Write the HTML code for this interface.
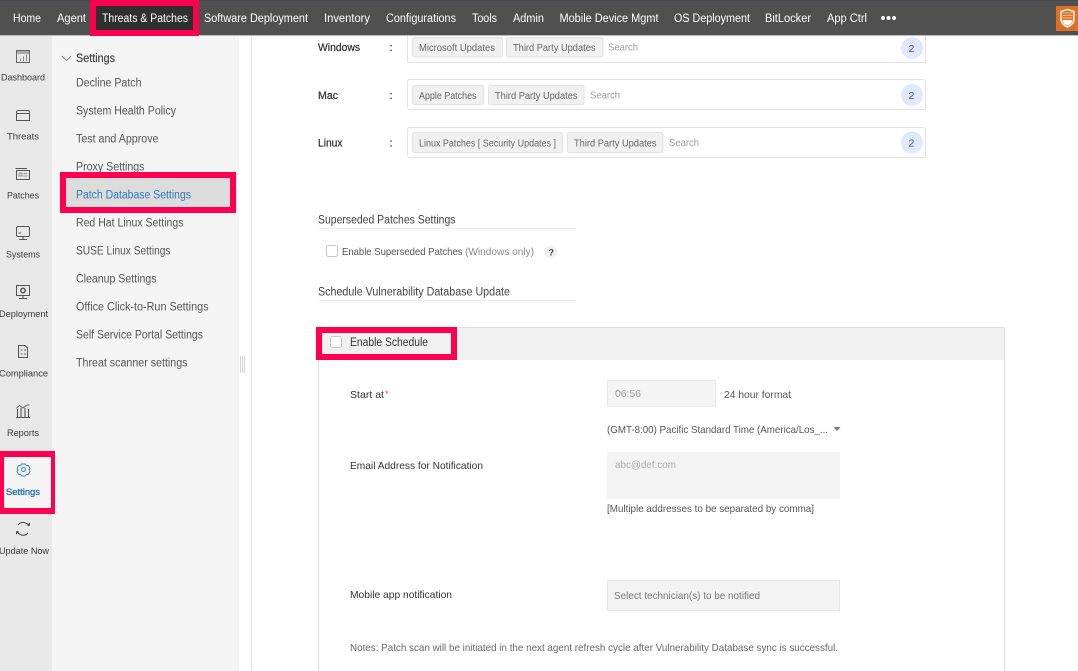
<!DOCTYPE html>
<html><head><meta charset="utf-8"><title>Patch Database Settings</title>
<style>
html,body{margin:0;padding:0;background:#fff;width:1078px;height:671px;overflow:hidden}
svg{display:block;filter:blur(.35px)}
text{font-family:"Liberation Sans",sans-serif;font-size:11px;fill:#555}
.n{fill:#fff;font-size:11.5px}
.r{font-size:9.5px;fill:#3a3a3a}
.m{fill:#555;font-size:11.5px}
.c{fill:#666;font-size:10px}
.s{fill:#999;font-size:10.5px}
.l{fill:#333;font-size:10.5px}
.h{fill:#333;font-size:11px;stroke:#333;stroke-width:.25px}
.d{fill:#555;font-size:10.5px}
.t{fill:#444;font-size:11.5px}
.i{fill:none;stroke:#555;stroke-width:1}
</style></head><body>
<svg width="1078" height="671" viewBox="0 0 1078 671" xmlns="http://www.w3.org/2000/svg">
<!-- panels -->
<rect x="0" y="36" width="52" height="635" fill="#e8e8e8"/>
<rect x="52" y="36" width="187" height="635" fill="#f4f4f4"/>
<rect x="251" y="36" width="1" height="635" fill="#e6e6e6"/>
<!-- top bar -->
<rect x="0" y="0" width="1078" height="35" fill="#505050"/>
<rect x="0" y="0" width="1078" height="1" fill="#474752"/>
<rect x="0" y="35" width="1078" height="1" fill="#bdbdbd"/>
<rect x="90" y="0" width="109" height="36" fill="#ff0050"/>
<rect x="96" y="6" width="97" height="24" fill="#303030"/>
<text class="n" x="13" y="22" textLength="28" lengthAdjust="spacingAndGlyphs">Home</text>
<text class="n" x="57" y="22" textLength="29" lengthAdjust="spacingAndGlyphs">Agent</text>
<text class="n" x="102" y="22" textLength="86" lengthAdjust="spacingAndGlyphs">Threats &amp; Patches</text>
<text class="n" x="204" y="22" textLength="104" lengthAdjust="spacingAndGlyphs">Software Deployment</text>
<text class="n" x="324" y="22" textLength="46" lengthAdjust="spacingAndGlyphs">Inventory</text>
<text class="n" x="386" y="22" textLength="70" lengthAdjust="spacingAndGlyphs">Configurations</text>
<text class="n" x="472" y="22" textLength="25" lengthAdjust="spacingAndGlyphs">Tools</text>
<text class="n" x="513" y="22" textLength="31" lengthAdjust="spacingAndGlyphs">Admin</text>
<text class="n" x="559.500" y="22" textLength="99" lengthAdjust="spacingAndGlyphs">Mobile Device Mgmt</text>
<text class="n" x="674" y="22" textLength="76" lengthAdjust="spacingAndGlyphs">OS Deployment</text>
<text class="n" x="765" y="22" textLength="46" lengthAdjust="spacingAndGlyphs">BitLocker</text>
<text class="n" x="827" y="22" textLength="40" lengthAdjust="spacingAndGlyphs">App Ctrl</text>
<circle cx="883" cy="18" r="2" fill="#fff"/><circle cx="888.500" cy="18" r="2" fill="#fff"/><circle cx="894" cy="18" r="2" fill="#fff"/>
<rect x="1056" y="6" width="22" height="25" fill="#dd7023"/>
<path d="M1061 11.500 L1067.500 9.500 L1074 11.500 V19 C1074 23 1071 25.500 1067.500 27 C1064 25.500 1061 23 1061 19Z" fill="none" stroke="#fff" stroke-width="1.400"/>
<path d="M1062.500 13H1072.500M1062.500 15.500H1072.500M1062.500 18H1072.500" stroke="#f3bd92" stroke-width="1"/>
<path d="M1062.500 20H1072.500C1072 23 1070 24.500 1067.500 25.500C1065 24.500 1063 23 1062.500 20Z" fill="#fff"/>

<!-- rail -->
<g class="i">
<rect x="16.500" y="50.500" width="13" height="12" fill="none" stroke="#666"/><rect x="17" y="51" width="12" height="3" fill="#aaa" stroke="none"/><path d="M20.500 61V58.500M23.500 61V56.500M26.500 61V54.500" fill="none" stroke="#888"/>
<path d="M16.500 112.500 Q16.500 110.500 18.500 110.500H27.500Q29.500 110.500 29.500 112.500V120.500H16.500ZM16.500 113.500H29.500" fill="none" stroke="#555"/>
<path d="M16.500 170.500V179.500H29.500V170.500ZM15.500 168.500H27" fill="none" stroke="#555"/><path d="M19 173H22V176H19ZM23.500 173.500H27.500M23.500 176H27.500" fill="none" stroke="#777" stroke-width=".8"/>
<rect x="16.500" y="226.500" width="13" height="10" rx="1.500" fill="none" stroke="#555"/><path d="M23 237V239M19 239.500H27M18.500 233H21" fill="none" stroke="#555"/>
<rect x="16.500" y="285.500" width="13" height="10" fill="none" stroke="#555"/><circle cx="23" cy="290.500" r="2.200" fill="none" stroke="#555" stroke-width="1.500"/><path d="M23 296V298M19 298.500H27" fill="none" stroke="#555"/>
<path d="M18.500 345.500H25L27.500 348V357.500H18.500Z" fill="none" stroke="#555"/><path d="M20.500 350H22.500M24 350H26M20.500 354H22.500M24 354H26" fill="none" stroke="#666"/>
<path d="M17.500 409V417M21 408V417M25 408V417M28.500 409V417M16 417.500H30" fill="none" stroke="#555" stroke-width="1.100"/><path d="M16.500 408L19.500 405.500L23 408L27 405L29.500 405" fill="none" stroke="#666"/>
</g>
<text class="r" x="1" y="80.500" textLength="44" lengthAdjust="spacingAndGlyphs">Dashboard</text>
<text class="r" x="7" y="139.500" textLength="32" lengthAdjust="spacingAndGlyphs">Threats</text>
<text class="r" x="7" y="198.500" textLength="32" lengthAdjust="spacingAndGlyphs">Patches</text>
<text class="r" x="6" y="257.500" textLength="34" lengthAdjust="spacingAndGlyphs">Systems</text>
<text class="r" x="-1" y="317" textLength="49" lengthAdjust="spacingAndGlyphs">Deployment</text>
<text class="r" x="-1" y="376.500" textLength="49" lengthAdjust="spacingAndGlyphs">Compliance</text>
<text class="r" x="7" y="436" textLength="32" lengthAdjust="spacingAndGlyphs">Reports</text>
<rect x="0" y="451" width="55" height="63" fill="#ff0050"/>
<rect x="4" y="457" width="47" height="51" fill="#f4f4f4"/>
<circle cx="23.500" cy="469.500" r="2" fill="none" stroke="#3a80b8"/>
<path d="M21.500 464H25.500L26.300 465.700L28.300 465.500L30 468.500L29 470L30 471.500L28.300 474.500L26.300 474.300L25.500 476H21.500L20.700 474.300L18.700 474.500L17 471.500L18 470L17 468.500L18.700 465.500L20.700 465.700Z" fill="none" stroke="#3a80b8" stroke-width=".9"/>
<text class="r" x="6" y="495" textLength="34" lengthAdjust="spacingAndGlyphs" style="fill:#1f6fb2;stroke:#1f6fb2;stroke-width:.3px">Settings</text>
<path d="M29 526A6.500 6.500 0 0 0 18 525M17 531A6.500 6.500 0 0 0 28 533" fill="none" stroke="#444" stroke-width="1"/>
<path d="M26.500 525.500H30V522.500ZM19.500 531.500H16V534.500Z" fill="#444"/>
<text class="r" x="-1" y="554" textLength="50" lengthAdjust="spacingAndGlyphs">Update Now</text>

<!-- submenu -->
<path d="M62 56L66.500 60.500L71 56" fill="none" stroke="#888" stroke-width="1"/>
<text x="76" y="62" textLength="39" lengthAdjust="spacingAndGlyphs" style="fill:#444;font-size:11.500px;stroke:#444;stroke-width:.2px">Settings</text>
<text class="m" x="76" y="86.500" textLength="65.500" lengthAdjust="spacingAndGlyphs">Decline Patch</text>
<text class="m" x="76" y="114.500" textLength="100" lengthAdjust="spacingAndGlyphs">System Health Policy</text>
<text class="m" x="76" y="142.500" textLength="82.500" lengthAdjust="spacingAndGlyphs">Test and Approve</text>
<text class="m" x="76" y="170.500" textLength="68.500" lengthAdjust="spacingAndGlyphs">Proxy Settings</text>
<rect x="60" y="172" width="176" height="41" fill="#ff0050"/>
<rect x="66" y="178" width="164" height="29" fill="#dcdcdc"/>
<text class="m" x="76" y="198.500" textLength="115" lengthAdjust="spacingAndGlyphs" style="fill:#2f7cb5">Patch Database Settings</text>
<text class="m" x="76" y="226.500" textLength="107.500" lengthAdjust="spacingAndGlyphs">Red Hat Linux Settings</text>
<text class="m" x="76" y="254.500" textLength="94.500" lengthAdjust="spacingAndGlyphs">SUSE Linux Settings</text>
<text class="m" x="76" y="282.500" textLength="80.500" lengthAdjust="spacingAndGlyphs">Cleanup Settings</text>
<text class="m" x="76" y="310.500" textLength="132.500" lengthAdjust="spacingAndGlyphs">Office Click-to-Run Settings</text>
<text class="m" x="76" y="338.500" textLength="127" lengthAdjust="spacingAndGlyphs">Self Service Portal Settings</text>
<text class="m" x="76" y="366.500" textLength="111.500" lengthAdjust="spacingAndGlyphs">Threat scanner settings</text>
<path d="M240.500 356V373M242.500 356V373M244.500 356V373" stroke="#d4d4d4" stroke-width="1" fill="none"/>

<!-- OS rows -->
<text class="h" x="318" y="51" textLength="42" lengthAdjust="spacingAndGlyphs">Windows</text>
<text class="h" x="389.500" y="51">:</text>
<path d="M407.500 36V62.500H925.500V36" fill="none" stroke="#e3e3e3"/>
<rect x="412.500" y="37.500" width="90" height="19.500" rx="2" fill="#f0f0f0" stroke="#e2e2e2"/>
<text class="c" x="419" y="51" textLength="76" lengthAdjust="spacingAndGlyphs">Microsoft Updates</text>
<rect x="506.500" y="37.500" width="96.500" height="19.500" rx="2" fill="#f0f0f0" stroke="#e2e2e2"/>
<text class="c" x="513" y="51" textLength="82.500" lengthAdjust="spacingAndGlyphs">Third Party Updates</text>
<text class="s" x="608" y="50.500" textLength="30" lengthAdjust="spacingAndGlyphs">Search</text>
<circle cx="912" cy="48" r="11" fill="#dee9fb"/><text x="908.500" y="52" style="fill:#555;font-size:10.500px">2</text>

<text class="h" x="318" y="99" textLength="20" lengthAdjust="spacingAndGlyphs">Mac</text>
<text class="h" x="389.500" y="99">:</text>
<rect x="407.500" y="79.500" width="518" height="30" rx="2" fill="none" stroke="#e3e3e3"/>
<rect x="412.500" y="85.500" width="71" height="19" rx="2" fill="#f0f0f0" stroke="#e2e2e2"/>
<text class="c" x="419" y="99" textLength="57.500" lengthAdjust="spacingAndGlyphs">Apple Patches</text>
<rect x="488.500" y="85.500" width="95.500" height="19" rx="2" fill="#f0f0f0" stroke="#e2e2e2"/>
<text class="c" x="495" y="99" textLength="82.500" lengthAdjust="spacingAndGlyphs">Third Party Updates</text>
<text class="s" x="590" y="98.500" textLength="30" lengthAdjust="spacingAndGlyphs">Search</text>
<circle cx="912" cy="95" r="11" fill="#dee9fb"/><text x="908.500" y="99" style="fill:#555;font-size:10.500px">2</text>

<text class="h" x="318" y="146.500" textLength="24.500" lengthAdjust="spacingAndGlyphs">Linux</text>
<text class="h" x="389.500" y="146.500">:</text>
<rect x="407.500" y="127.500" width="518" height="30" rx="2" fill="none" stroke="#e3e3e3"/>
<rect x="412.500" y="132.500" width="150" height="20" rx="2" fill="#f0f0f0" stroke="#e2e2e2"/>
<text class="c" x="419" y="146.500" textLength="137" lengthAdjust="spacingAndGlyphs">Linux Patches [ Security Updates ]</text>
<rect x="567.500" y="132.500" width="95.500" height="20" rx="2" fill="#f0f0f0" stroke="#e2e2e2"/>
<text class="c" x="574" y="146.500" textLength="82.500" lengthAdjust="spacingAndGlyphs">Third Party Updates</text>
<text class="s" x="669" y="146" textLength="30" lengthAdjust="spacingAndGlyphs">Search</text>
<circle cx="912" cy="142.500" r="11" fill="#dee9fb"/><text x="908.500" y="146.500" style="fill:#555;font-size:10.500px">2</text>

<!-- superseded -->
<text class="t" x="318" y="223.500" textLength="137.500" lengthAdjust="spacingAndGlyphs">Superseded Patches Settings</text>
<rect x="318" y="228" width="258" height="1" fill="#eeeeee"/>
<rect x="326.500" y="245.500" width="11" height="11" rx="2" fill="#fff" stroke="#c8c8c8"/>
<text class="d" x="342" y="255" textLength="120.500" lengthAdjust="spacingAndGlyphs">Enable Superseded Patches</text>
<text x="465" y="255" textLength="69" lengthAdjust="spacingAndGlyphs" style="fill:#888;font-size:10.500px">(Windows only)</text>
<circle cx="551" cy="252" r="6.500" fill="#f0f0f0"/><text x="548.500" y="255.500" style="fill:#444;font-size:9px;font-weight:bold">?</text>
<text class="t" x="318" y="295.500" textLength="192" lengthAdjust="spacingAndGlyphs">Schedule Vulnerability Database Update</text>
<rect x="318" y="300" width="258" height="1" fill="#eeeeee"/>

<!-- card -->
<path d="M318.500 671V330Q318.500 327.500 321 327.500H1002Q1004.500 327.500 1004.500 330V671" fill="none" stroke="#dddddd"/>
<path d="M319 360V330Q319 328 321 328H1002Q1004 328 1004 330V360Z" fill="#f0f0f0"/>
<rect x="316" y="327" width="141" height="33" fill="#ff0050"/>
<rect x="322" y="333" width="129" height="21" fill="#f0f0f0"/>
<rect x="330.500" y="336.500" width="11" height="11" rx="2" fill="#fff" stroke="#c8c8c8"/>
<text x="350" y="346" textLength="78" lengthAdjust="spacingAndGlyphs" style="fill:#333;font-size:11.500px">Enable Schedule</text>

<text class="l" x="350" y="398" textLength="34" lengthAdjust="spacingAndGlyphs">Start at</text>
<text x="385" y="397" style="fill:#e44;font-size:9px">*</text>
<rect x="607.500" y="380.500" width="108" height="26" rx="1" fill="#f4f4f4" stroke="#e8e8e8"/>
<text x="615" y="397" textLength="26" lengthAdjust="spacingAndGlyphs" style="fill:#999;font-size:10.500px">06:56</text>
<text class="d" x="724" y="398" textLength="67" lengthAdjust="spacingAndGlyphs">24 hour format</text>
<text class="d" x="607" y="433" textLength="221" lengthAdjust="spacingAndGlyphs">(GMT-8:00) Pacific Standard Time (America/Los_...</text>
<path d="M833.500 427H840.500L837 431Z" fill="#777"/>
<text class="l" x="350" y="469" textLength="133" lengthAdjust="spacingAndGlyphs">Email Address for Notification</text>
<rect x="607" y="452" width="233" height="47" fill="#f3f3f3"/>
<text x="615" y="468" textLength="61" lengthAdjust="spacingAndGlyphs" style="fill:#aaa;font-size:10.500px">abc@def.com</text>
<text class="d" x="607" y="512" textLength="207" lengthAdjust="spacingAndGlyphs">[Multiple addresses to be separated by comma]</text>
<text class="l" x="350" y="598" textLength="102" lengthAdjust="spacingAndGlyphs">Mobile app notification</text>
<rect x="607.500" y="580.500" width="232" height="30" fill="#f3f3f3" stroke="#e6e6e6"/>
<text x="614" y="599" textLength="146" lengthAdjust="spacingAndGlyphs" style="fill:#777;font-size:10.500px">Select technician(s) to be notified</text>
<text x="350" y="651" textLength="488" lengthAdjust="spacingAndGlyphs" style="fill:#666;font-size:10.500px">Notes: Patch scan will be initiated in the next agent refresh cycle after Vulnerability Database sync is successful.</text>
</svg>
</body></html>
